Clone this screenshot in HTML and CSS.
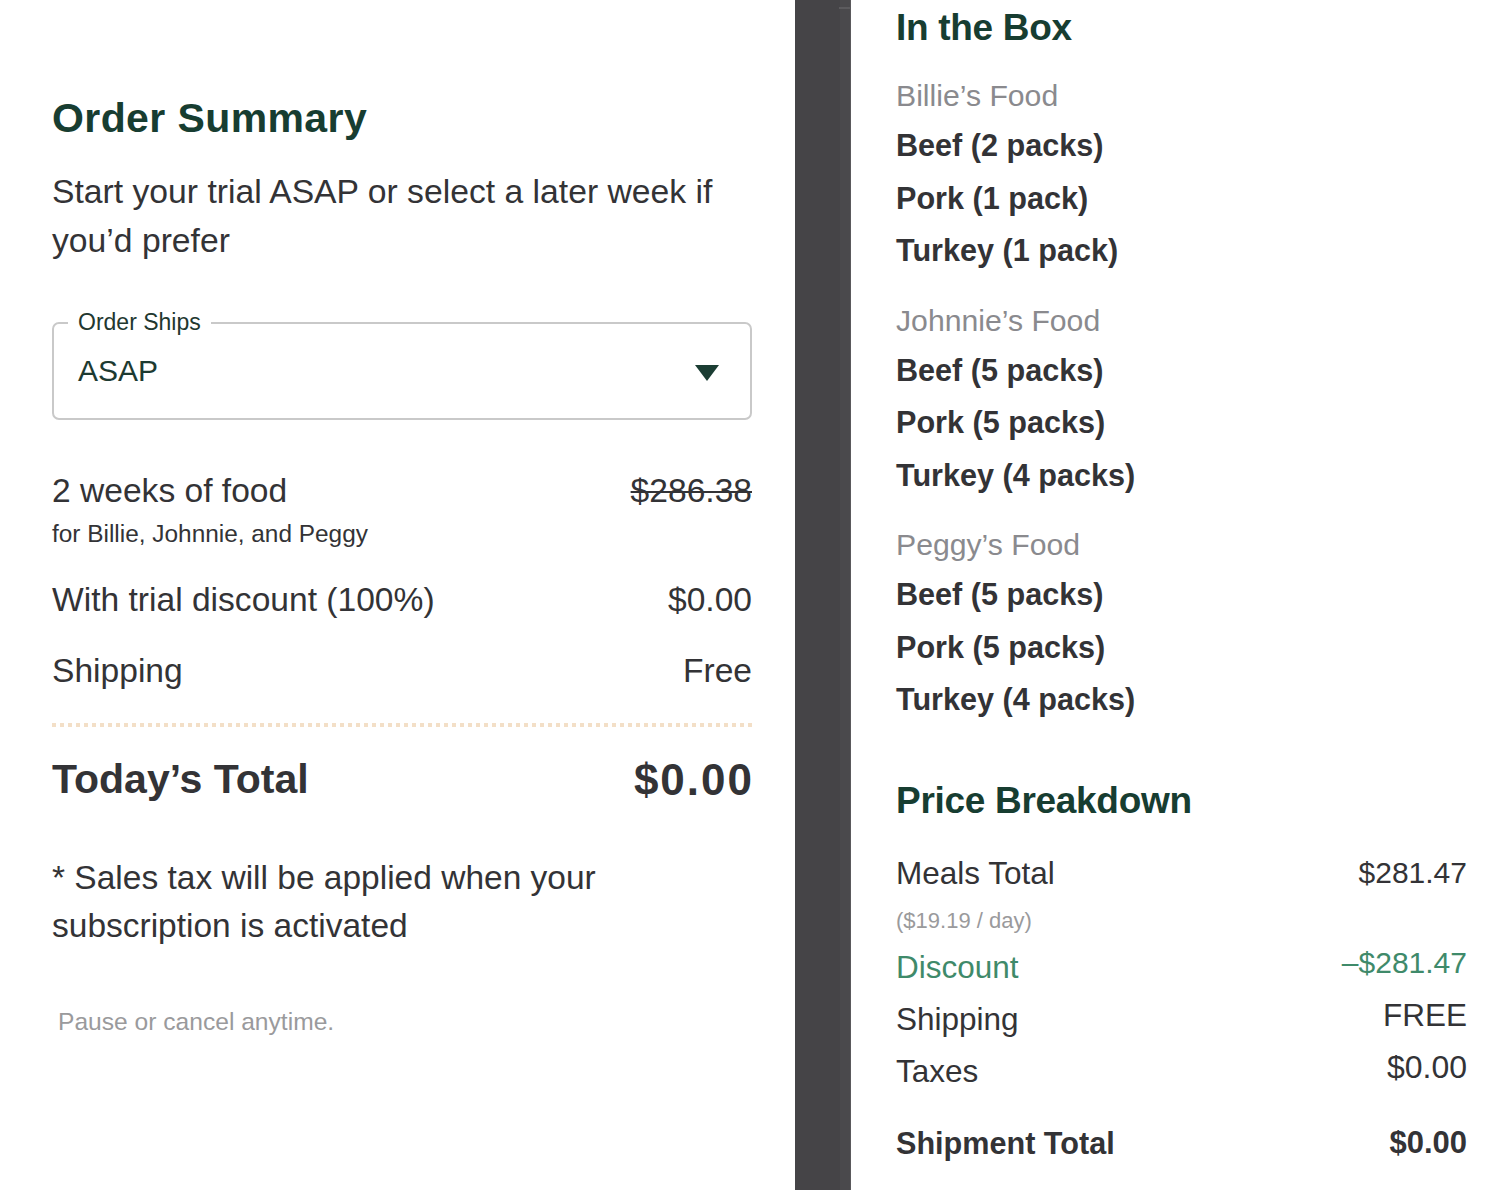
FILE: index.html
```html
<!DOCTYPE html>
<html lang="en">
<head>
<meta charset="utf-8">
<title>Order Summary</title>
<link rel="stylesheet" href="styles.css">
</head>
<body>
<div class="page">
  <section class="summary">
    <h1 class="summary-title">Order Summary</h1>
    <p class="intro">Start your trial ASAP or select a later week if you’d prefer</p>

    <div class="select">
      <span class="select-label">Order Ships</span>
      <span class="select-value">ASAP</span>
      <svg class="select-arrow" width="24" height="16" viewBox="0 0 24 16" aria-hidden="true">
        <polygon points="0,0 24,0 12,16" fill="#1b3d33"/>
      </svg>
    </div>

    <div class="line line-food">
      <span>2 weeks of food</span>
      <span class="strike">$286.38</span>
    </div>
    <div class="line-sub">for Billie, Johnnie, and Peggy</div>
    <div class="line line-discount">
      <span>With trial discount (100%)</span>
      <span>$0.00</span>
    </div>
    <div class="line line-shipping">
      <span>Shipping</span>
      <span>Free</span>
    </div>

    <div class="dots"></div>

    <div class="total">
      <span>Today’s Total</span>
      <span class="total-amount">$0.00</span>
    </div>

    <p class="tax-note">* Sales tax will be applied when your subscription is activated</p>
    <p class="pause">Pause or cancel anytime.</p>
  </section>

  <div class="divider"><span class="divider-dash"></span></div>

  <section class="details">
    <h2 class="details-title">In the Box</h2>

    <div class="pet pet-first">
      <div class="pet-name">Billie’s Food</div>
      <div class="pack pack-first">Beef (2 packs)</div>
      <div class="pack">Pork (1 pack)</div>
      <div class="pack">Turkey (1 pack)</div>
    </div>
    <div class="pet">
      <div class="pet-name">Johnnie’s Food</div>
      <div class="pack pack-first">Beef (5 packs)</div>
      <div class="pack">Pork (5 packs)</div>
      <div class="pack">Turkey (4 packs)</div>
    </div>
    <div class="pet">
      <div class="pet-name">Peggy’s Food</div>
      <div class="pack pack-first">Beef (5 packs)</div>
      <div class="pack">Pork (5 packs)</div>
      <div class="pack">Turkey (4 packs)</div>
    </div>

    <h2 class="details-title price-title">Price Breakdown</h2>

    <div class="price-row price-meals">
      <span>Meals Total</span>
      <span class="price-num">$281.47</span>
    </div>
    <div class="price-sub">($19.19 / day)</div>
    <div class="price-row price-raised price-green">
      <span>Discount</span>
      <span class="price-value price-num">–$281.47</span>
    </div>
    <div class="price-row price-raised">
      <span>Shipping</span>
      <span class="price-value">FREE</span>
    </div>
    <div class="price-row price-raised">
      <span>Taxes</span>
      <span class="price-value price-tax">$0.00</span>
    </div>
    <div class="price-row price-total">
      <span>Shipment Total</span>
      <span class="price-num">$0.00</span>
    </div>
  </section>
</div>
</body>
</html>
```

FILE: styles.css
```css
* { box-sizing: border-box; }

html, body {
  margin: 0;
  padding: 0;
  background: #ffffff;
}

body {
  font-family: "Liberation Sans", Arial, sans-serif;
  color: #333336;
  height: 1190px;
  overflow: hidden;
}

.page {
  display: flex;
  height: 1190px;
}

/* ---------- left: order summary ---------- */
.summary {
  width: 795px;
  flex: none;
  padding: 94px 43px 0 52px;
}

.summary-title {
  margin: 0;
  font-size: 41px;
  line-height: 49px;
  font-weight: 700;
  color: #173d31;
  letter-spacing: 0.4px;
}

.intro {
  margin: 24px 0 0;
  font-size: 33.7px;
  line-height: 49px;
}

.select {
  position: relative;
  margin-top: 57px;
  height: 98px;
  border: 2px solid #c9c9c9;
  border-radius: 7px;
  display: flex;
  align-items: center;
  padding: 0 31px 0 24px;
}

.select-label {
  position: absolute;
  left: 14px;
  top: -17px;
  padding: 0 10px;
  background: #ffffff;
  font-size: 23px;
  line-height: 30px;
  color: #22372f;
}

.select-value {
  flex: 1;
  font-size: 30px;
  line-height: 94px;
  color: #1d3a31;
}

.select-arrow {
  display: block;
  margin-top: 3px;
}

.line {
  display: flex;
  justify-content: space-between;
  font-size: 33.6px;
  line-height: 49px;
}

.line-food { margin-top: 46px; }

.strike { text-decoration: line-through; text-decoration-thickness: 2px; }

.line-sub {
  margin-top: 4px;
  font-size: 24.4px;
  line-height: 30px;
}

.line-discount { margin-top: 26px; }
.line-shipping { margin-top: 22px; }

.dots {
  margin-top: 28px;
  height: 4px;
  background-image: linear-gradient(to right, #f3dfc7 0 4px, transparent 4px 8px);
  background-size: 8px 4px;
  background-repeat: repeat-x;
}

.total {
  margin-top: 28px;
  display: flex;
  justify-content: space-between;
  font-size: 41px;
  line-height: 49px;
  font-weight: 700;
}

.total-amount {
  font-size: 44px;
  letter-spacing: 2px;
  margin-right: -2px;
}

.tax-note {
  margin: 50px 0 0;
  font-size: 33.5px;
  line-height: 48px;
}

.pause {
  margin: 57px 0 0 6px;
  font-size: 24.6px;
  line-height: 30px;
  color: #9a9a9c;
}

/* ---------- middle strip ---------- */
.divider {
  width: 56px;
  flex: none;
  background: linear-gradient(to right, #454447 0, #454447 45px, #4a494c 45px, #4a494c 55px, #5a595c 55px);
  position: relative;
}

.divider-dash {
  position: absolute;
  right: 1px;
  top: 7px;
  width: 11px;
  height: 2px;
  background: #5c5b5e;
}

/* ---------- right: details ---------- */
.details {
  flex: 1;
  padding: 6px 45px 0 45px;
}

.details-title {
  margin: 0;
  font-size: 37px;
  line-height: 44px;
  font-weight: 700;
  color: #173d31;
  letter-spacing: -0.3px;
}

.pet { margin-top: 24px; }
.pet-first { margin-top: 26px; }

.pet-name {
  font-size: 30.2px;
  line-height: 40px;
  color: #8a8a8e;
}

.pack {
  font-size: 30.6px;
  line-height: 52.5px;
  font-weight: 700;
  color: #333336;
}

.pack-first { margin-top: 3px; }

.price-title { margin-top: 53px; }

.price-row {
  display: flex;
  justify-content: space-between;
  align-items: flex-start;
  font-size: 31.5px;
  line-height: 40px;
}

.price-num { font-size: 30px; }

.price-tax { font-size: 32px; }

.price-meals { margin-top: 30px; }

.price-sub {
  margin-top: 14px;
  font-size: 22px;
  line-height: 28px;
  color: #9a9a9c;
}

.price-raised { margin-top: 12px; }

.price-value { line-height: 32px; }

.price-green { color: #3f8a6a; }

.price-total {
  margin-top: 32px;
  font-weight: 700;
  font-size: 30.6px;
}

.price-total .price-num { font-size: 31px; }
```
